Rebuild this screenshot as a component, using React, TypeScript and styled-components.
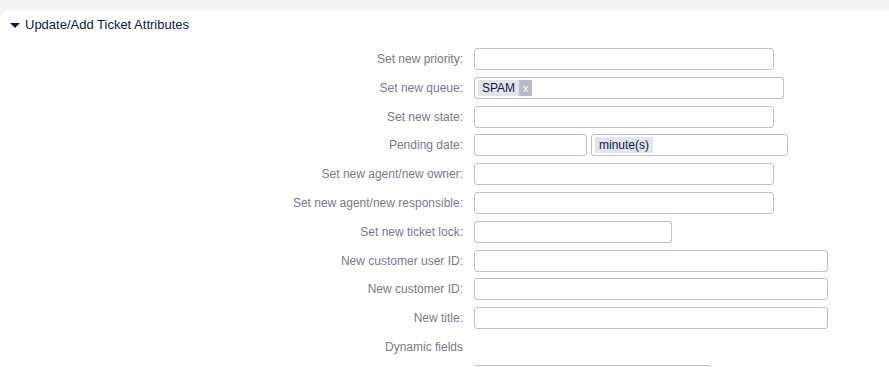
import React from "react";
import styled, { createGlobalStyle } from "styled-components";

const GlobalStyle = createGlobalStyle`
  html, body {
    margin: 0;
    padding: 0;
    background: #f4f4f7;
    font-family: "Liberation Sans", Arial, sans-serif;
  }
`;

type Field = {
  label: string;
  width?: number;
  chip?: string;
  removable?: boolean;
  pending?: boolean;
};

const fields: Field[] = [
  { label: "Set new priority:", width: 300 },
  { label: "Set new queue:", width: 310, chip: "SPAM", removable: true },
  { label: "Set new state:", width: 300 },
  { label: "Pending date:", pending: true },
  { label: "Set new agent/new owner:", width: 300 },
  { label: "Set new agent/new responsible:", width: 300 },
  { label: "Set new ticket lock:", width: 198 },
  { label: "New customer user ID:", width: 354 },
  { label: "New customer ID:", width: 354 },
  { label: "New title:", width: 354 },
];

export default function App() {
  return (
    <>
      <GlobalStyle />
      <Page>
        <Panel>
          <Header>
            <Caret />
            <HeaderTitle>Update/Add Ticket Attributes</HeaderTitle>
          </Header>
          <Form>
            {fields.map((f) => (
              <React.Fragment key={f.label}>
                <Label>{f.label}</Label>
                {f.pending ? (
                  <Inline>
                    <Input width={113} />
                    <Input width={197}>
                      <Chip>minute(s)</Chip>
                    </Input>
                  </Inline>
                ) : (
                  <Input width={f.width ?? 300}>
                    {f.chip && (
                      <Chip>
                        {f.chip}
                        {f.removable && <ChipRemove>x</ChipRemove>}
                      </Chip>
                    )}
                  </Input>
                )}
              </React.Fragment>
            ))}
            <Label>Dynamic fields</Label>
            <span />
            <span />
            <Input width={238} />
          </Form>
        </Panel>
      </Page>
    </>
  );
}

const Page = styled.div`
  width: 889px;
  height: 367px;
  overflow: hidden;
  padding-top: 11px;
  box-sizing: border-box;
`;

const Panel = styled.section`
  background: #ffffff;
  border-top-left-radius: 9px;
  min-height: 400px;
  width: 920px;
`;

const Header = styled.div`
  display: flex;
  align-items: center;
  gap: 5px;
  padding: 3px 10px 0;
  height: 21px;
`;

const Caret = styled.span`
  width: 0;
  height: 0;
  border-left: 5px solid transparent;
  border-right: 5px solid transparent;
  border-top: 5px solid #0a1a45;
  margin-top: 1px;
`;

const HeaderTitle = styled.h2`
  margin: 0;
  font-size: 13px;
  font-weight: normal;
  color: #0a1a45;
`;

const Form = styled.div`
  display: grid;
  grid-template-columns: 463px auto;
  justify-content: start;
  column-gap: 11px;
  row-gap: 6.8px;
  margin-top: 13px;
`;

const Label = styled.label`
  height: 22px;
  display: flex;
  align-items: center;
  justify-content: flex-end;
  font-size: 12px;
  color: #787896;
`;

const Inline = styled.div`
  display: flex;
  gap: 4px;
`;

const Input = styled.div<{ width: number }>`
  width: ${({ width }) => width}px;
  height: 22px;
  box-sizing: border-box;
  border: 1px solid #bfbcd4;
  border-radius: 3px;
  background: #fff;
  display: flex;
  align-items: center;
  padding: 0 3px;
`;

const Chip = styled.span`
  display: inline-flex;
  align-items: center;
  height: 16px;
  background: #e4e4ed;
  color: #0a1a45;
  font-size: 12px;
  padding-left: 4px;
  padding-right: 4px;
  &:has(> span) {
    padding-right: 0;
  }
`;

const ChipRemove = styled.span`
  display: inline-flex;
  align-items: center;
  justify-content: center;
  height: 16px;
  width: 13px;
  margin-left: 4px;
  background: #b9b9c8;
  color: #ffffff;
  font-size: 11px;
`;
